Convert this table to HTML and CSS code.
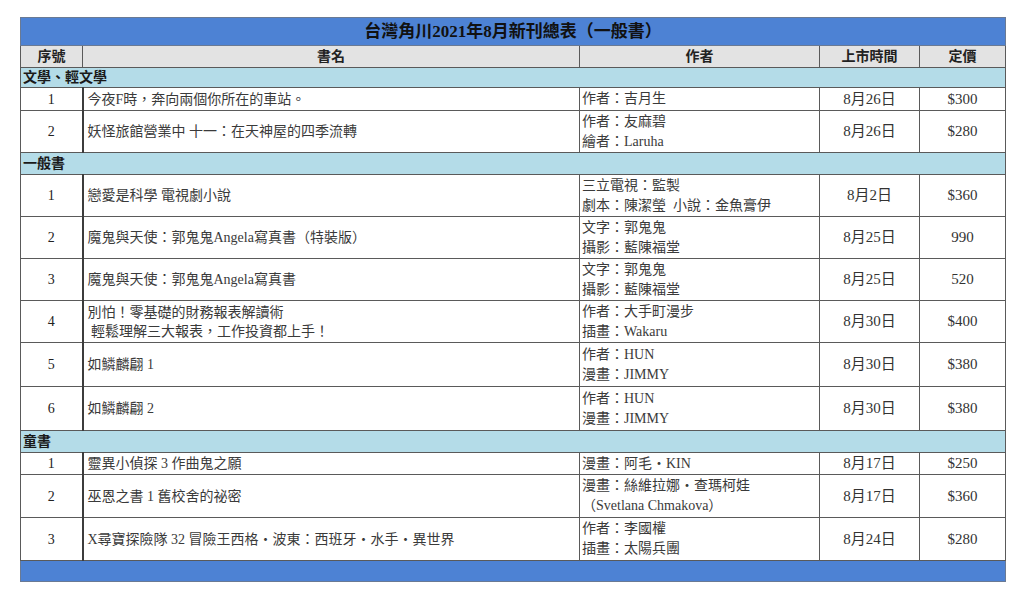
FILE: index.html
```html
<!DOCTYPE html>
<html lang="zh-Hant">
<head>
<meta charset="utf-8">
<title>台灣角川2021年8月新刊總表（一般書）</title>
<link rel="stylesheet" href="styles.css">
</head>
<body>
<table class="sheet">
  <colgroup>
    <col class="c-no"><col class="c-title"><col class="c-author"><col class="c-date"><col class="c-price">
  </colgroup>
  <tr class="r-banner"><td colspan="5" class="banner">台灣角川2021年8月新刊總表（一般書）</td></tr>
  <tr class="r-head">
    <td class="head">序號</td><td class="head">書名</td><td class="head">作者</td><td class="head">上市時間</td><td class="head">定價</td>
  </tr>
  <tr class="r-sec"><td colspan="5" class="sec">文學、輕文學</td></tr>
  <tr class="r-1">
    <td class="no">1</td><td class="title">今夜F時，奔向兩個你所在的車站。</td><td class="author">作者：吉月生</td><td class="date">8月26日</td><td class="price">$300</td>
  </tr>
  <tr class="r-2">
    <td class="no">2</td><td class="title">妖怪旅館營業中 十一：在天神屋的四季流轉</td><td class="author">作者：友麻碧<br>繪者：Laruha</td><td class="date">8月26日</td><td class="price">$280</td>
  </tr>
  <tr class="r-sec2"><td colspan="5" class="sec">一般書</td></tr>
  <tr class="r-2">
    <td class="no">1</td><td class="title">戀愛是科學 電視劇小說</td><td class="author">三立電視：監製<br>劇本：陳潔瑩&nbsp;&nbsp;小說：金魚膏伊</td><td class="date">8月2日</td><td class="price">$360</td>
  </tr>
  <tr class="r-2">
    <td class="no">2</td><td class="title">魔鬼與天使：郭鬼鬼Angela寫真書（特裝版）</td><td class="author">文字：郭鬼鬼<br>攝影：藍陳福堂</td><td class="date">8月25日</td><td class="price">990</td>
  </tr>
  <tr class="r-2">
    <td class="no">3</td><td class="title">魔鬼與天使：郭鬼鬼Angela寫真書</td><td class="author">文字：郭鬼鬼<br>攝影：藍陳福堂</td><td class="date">8月25日</td><td class="price">520</td>
  </tr>
  <tr class="r-2">
    <td class="no">4</td><td class="title">別怕！零基礎的財務報表解讀術<br>&nbsp;輕鬆理解三大報表，工作投資都上手！</td><td class="author">作者：大手町漫步<br>插畫：Wakaru</td><td class="date">8月30日</td><td class="price">$400</td>
  </tr>
  <tr class="r-3">
    <td class="no">5</td><td class="title">如鱗麟翩 1</td><td class="author">作者：HUN<br>漫畫：JIMMY</td><td class="date">8月30日</td><td class="price">$380</td>
  </tr>
  <tr class="r-3">
    <td class="no">6</td><td class="title">如鱗麟翩 2</td><td class="author">作者：HUN<br>漫畫：JIMMY</td><td class="date">8月30日</td><td class="price">$380</td>
  </tr>
  <tr class="r-sec2"><td colspan="5" class="sec">童書</td></tr>
  <tr class="r-1b">
    <td class="no">1</td><td class="title">靈異小偵探 3 作曲鬼之願</td><td class="author">漫畫：阿毛・KIN</td><td class="date">8月17日</td><td class="price">$250</td>
  </tr>
  <tr class="r-2b">
    <td class="no">2</td><td class="title">巫恩之書 1 舊校舍的祕密</td><td class="author">漫畫：絲維拉娜・查瑪柯娃<br>（Svetlana Chmakova）</td><td class="date">8月17日</td><td class="price">$360</td>
  </tr>
  <tr class="r-2b">
    <td class="no">3</td><td class="title">X尋寶探險隊 32 冒險王西格・波東：西班牙・水手・異世界</td><td class="author">作者：李國權<br>插畫：太陽兵團</td><td class="date">8月24日</td><td class="price">$280</td>
  </tr>
  <tr class="r-foot"><td colspan="5" class="foot"></td></tr>
</table>
</body>
</html>
```

FILE: styles.css
```css
html, body {
  margin: 0;
  padding: 0;
  background: #ffffff;
}

body {
  padding: 17px 0 0 20px;
  font-family: "Liberation Serif", "Noto Sans CJK TC", serif;
  color: #3a3a3a;
}

.sheet {
  border-collapse: collapse;
  table-layout: fixed;
  width: 985px;
  font-size: 14px;
  line-height: 19px;
}

.c-no { width: 62px; }
.c-title { width: 497px; }
.c-author { width: 240px; }
.c-date { width: 100px; }
.c-price { width: 86px; }

.sheet td {
  border: 1px solid #5a5a5a;
  padding: 0 3px;
  vertical-align: middle;
  white-space: nowrap;
  overflow: hidden;
}

.sheet td.no {
  border-right: 2px solid #3c3c3c;
}

.r-banner { height: 28px; }
.r-head { height: 22px; }
.r-sec { height: 20px; }
.r-sec2 { height: 22px; }
.r-1 { height: 23px; }
.r-1b { height: 22px; }
.r-2 { height: 42px; }
.r-2b { height: 43px; }
.r-3 { height: 44px; }
.r-foot { height: 21px; }

.banner {
  background: #4d82d4;
  color: #111111;
  font-weight: bold;
  font-size: 17px;
  text-align: center;
  border-color: #6a7a94 !important;
}

.head {
  background: #e3e3e3;
  color: #222222;
  font-weight: bold;
  text-align: center;
}

.sec {
  background: #b4dce8;
  color: #1a1a1a;
  font-weight: bold;
  text-align: left;
  padding-left: 2px !important;
}

.no {
  text-align: center;
  color: #222222;
}

.title {
  text-align: left;
  padding-left: 4px !important;
}

.author {
  text-align: left;
  padding-left: 2px !important;
  line-height: 20px;
}

.date, .price {
  text-align: center;
  color: #333333;
  font-size: 15px;
}

.foot {
  background: #4d82d4;
  border-color: #6a7a94 !important;
}
```
